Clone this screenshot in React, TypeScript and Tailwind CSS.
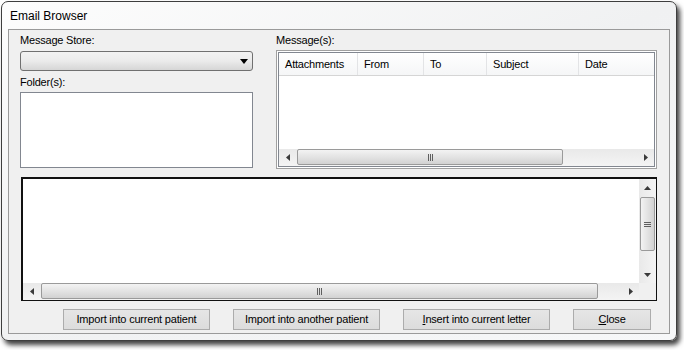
import React from 'react'

function Arrow({ dir }: { dir: 'left' | 'right' | 'up' | 'down' }) {
  const pts = {
    left: '4,0 4,7 0,3.5',
    right: '0,0 0,7 4,3.5',
    up: '0,4 7,4 3.5,0',
    down: '0,0 7,0 3.5,4',
  }[dir]
  const horiz = dir === 'left' || dir === 'right'
  return (
    <svg width={horiz ? 4 : 7} height={horiz ? 7 : 4} viewBox={horiz ? '0 0 4 7' : '0 0 7 4'}>
      <polygon points={pts} fill="#3a3a3a" />
    </svg>
  )
}

function GripV() {
  return (
    <div className="flex gap-px">
      <div className="w-px h-[7px] bg-[#5f5f5f]" />
      <div className="w-px h-[7px] bg-[#5f5f5f]" />
      <div className="w-px h-[7px] bg-[#5f5f5f]" />
    </div>
  )
}

function GripH() {
  return (
    <div className="flex flex-col gap-px">
      <div className="w-[7px] h-px bg-[#5f5f5f]" />
      <div className="w-[7px] h-px bg-[#5f5f5f]" />
      <div className="w-[7px] h-px bg-[#5f5f5f]" />
    </div>
  )
}

function HScroll({ thumbLeft, thumbWidth }: { thumbLeft: number; thumbWidth: number }) {
  return (
    <div className="flex h-[17px] bg-gradient-to-b from-[#e9e9e9] to-[#f4f4f4] flex-1">
      <div className="w-[17px] h-full flex items-center justify-center">
        <Arrow dir="left" />
      </div>
      <div className="flex-1 relative">
        <div
          className="absolute top-0 h-[16px] rounded-[2px] border border-[#9a9a9a] bg-gradient-to-b from-[#f3f3f3] via-[#e3e3e3] to-[#d2d2d2] flex items-center justify-center"
          style={{ left: thumbLeft, width: thumbWidth }}
        >
          <GripV />
        </div>
      </div>
      <div className="w-[17px] h-full flex items-center justify-center">
        <Arrow dir="right" />
      </div>
    </div>
  )
}

function Button({ children, width }: { children: React.ReactNode; width: string }) {
  return (
    <div
      className={`${width} h-[21px] border border-[#acacac] bg-gradient-to-b from-[#e6e6e6] to-[#dcdcdc] flex items-center justify-center text-[11px] text-black`}
    >
      {children}
    </div>
  )
}

export default function App() {
  const cols = [
    { name: 'Attachments', w: 'w-[79px]' },
    { name: 'From', w: 'w-[66px]' },
    { name: 'To', w: 'w-[63px]' },
    { name: 'Subject', w: 'w-[92px]' },
    { name: 'Date', w: 'flex-1' },
  ]

  return (
    <div className="w-[684px] h-[350px] bg-white pl-px pt-px font-['Liberation_Sans',Arial,sans-serif]">
      <div className="w-[676px] h-[340px] rounded-[7px] border border-[#3e3e3e] bg-gradient-to-br from-[#fdfdfd] via-[#f0f1f2] to-[#f7f8f9] shadow-[3px_4px_5px_rgba(0,0,0,0.75)] flex flex-col">
        <div className="h-[27px] pl-[8px] flex items-center text-[12px] text-black">Email Browser</div>

        <div className="mx-[6px] h-[305px] border border-[#9a9a9a] bg-[#f0f0f0] flex flex-col text-[11px] tracking-[-0.2px] text-black">
          <div className="flex pl-[11px] h-[139px]">
            {/* left column */}
            <div className="w-[233px] flex flex-col">
              <div className="mt-[4px] h-[13px] leading-[13px]">Message Store:</div>
              <div className="mt-[4px] h-[20px] rounded-[3px] border border-[#707070] bg-gradient-to-b from-[#f2f2f2] via-[#ebebeb] to-[#d6d6d6] flex items-center justify-end pr-[4px]">
                <svg width="8" height="5" viewBox="0 0 8 5">
                  <polygon points="0,0 8,0 4,5" fill="#000" />
                </svg>
              </div>
              <div className="mt-[5px] h-[13px] leading-[13px]">Folder(s):</div>
              <div className="mt-[3px] h-[76px] border border-[#828790] bg-white" />
            </div>

            {/* right column */}
            <div className="ml-[23px] w-[381px] flex flex-col">
              <div className="mt-[4px] h-[13px] leading-[13px]">Message(s):</div>
              <div className="mt-[3px] h-[119px] border border-[#a0a0a0] p-px bg-white">
                <div className="h-full border border-[#828790] bg-white flex flex-col">
                  <div className="h-[23px] flex border-b border-[#d5d5d5] bg-gradient-to-b from-white to-[#f5f6f7]">
                    {cols.map((c, i) => (
                      <div
                        key={c.name}
                        className={`${c.w} h-full flex items-center pl-[6px] ${i < cols.length - 1 ? 'border-r border-[#e3e4e6]' : ''}`}
                      >
                        {c.name}
                      </div>
                    ))}
                  </div>
                  <div className="flex-1" />
                  <div className="flex">
                    <HScroll thumbLeft={1} thumbWidth={266} />
                  </div>
                </div>
              </div>
            </div>
          </div>

          {/* big text box */}
          <div className="ml-[12px] mt-[8px] w-[636px] h-[124px] border-t-2 border-l-2 border-r border-b border-[#111] bg-white flex flex-col">
            <div className="flex-1 flex">
              <div className="flex-1" />
              <div className="w-[17px] flex flex-col bg-gradient-to-r from-[#e9e9e9] to-[#f4f4f4]">
                <div className="h-[17px] flex items-center justify-center">
                  <Arrow dir="up" />
                </div>
                <div className="flex-1 relative">
                  <div className="absolute top-px left-[1px] w-[15px] h-[54px] rounded-[2px] border border-[#9a9a9a] bg-gradient-to-r from-[#f3f3f3] via-[#e3e3e3] to-[#d2d2d2] flex items-center justify-center">
                    <GripH />
                  </div>
                </div>
                <div className="h-[17px] flex items-center justify-center">
                  <Arrow dir="down" />
                </div>
              </div>
            </div>
            <div className="flex h-[17px]">
              <HScroll thumbLeft={1} thumbWidth={557} />
              <div className="w-[17px] h-[17px] bg-[#f0f0f0]" />
            </div>
          </div>

          {/* buttons */}
          <div className="mt-[8px] ml-[54px] flex gap-[23px]">
            <Button width="w-[147px]">Import into current patient</Button>
            <Button width="w-[147px]">Import into another patient</Button>
            <Button width="w-[147px]">
              <span>
                <span className="underline">I</span>nsert into current letter
              </span>
            </Button>
            <Button width="w-[78px]">
              <span>
                <span className="underline">C</span>lose
              </span>
            </Button>
          </div>
        </div>
      </div>
    </div>
  )
}
